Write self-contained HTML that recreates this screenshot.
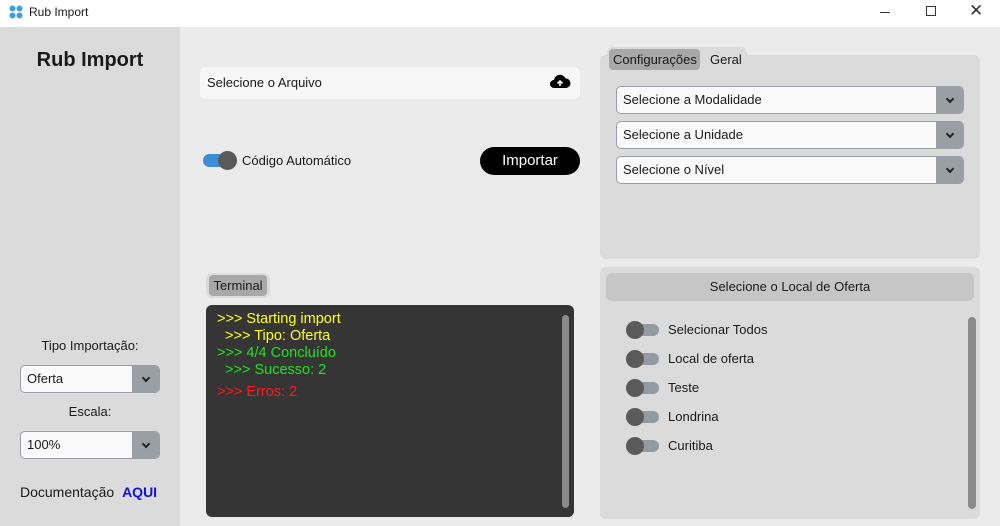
<!DOCTYPE html><html><head><style>
*{margin:0;padding:0;box-sizing:border-box}
body{width:1000px;height:526px;overflow:hidden;background:#ebebeb;font-family:"Liberation Sans",sans-serif;font-size:13px;color:#1a1a1a;position:relative}
.a{position:absolute}
.sel{position:absolute;background:#f9f9f9;border:1px solid #9a9ea5;border-radius:5px;overflow:hidden}
.sel span{position:absolute;left:6px;top:5px;font-size:13px}
.sel b{position:absolute;right:0;top:0;bottom:0;width:27px;background:#9a9ea5}
.sel b:after{content:"";position:absolute;left:11px;top:9px;width:4px;height:4px;border-right:2px solid #222;border-bottom:2px solid #222;transform:rotate(45deg)}
.tg{position:absolute;width:33px;height:12px;border-radius:6px;background:#939ba2}
.tg i{position:absolute;left:0;top:-3px;width:18px;height:18px;border-radius:50%;background:#5a5a5a}
.lb{position:absolute;left:668px;font-size:13px}
</style></head><body>
<div class="a" style="left:0;top:0;width:1000px;height:27px;background:#fff"></div>
<svg class="a" style="left:9px;top:5px" width="14" height="14"><g fill="#3a9ee6"><circle cx="3.5" cy="3.5" r="3"/><circle cx="10.5" cy="3.5" r="3"/><circle cx="3.5" cy="10.5" r="3"/><circle cx="10.5" cy="10.5" r="3"/></g></svg>
<div class="a" style="left:29px;top:5px;font-size:12px">Rub Import</div>
<div class="a" style="left:880px;top:12px;width:10px;height:1px;background:#333"></div>
<div class="a" style="left:926px;top:6px;width:10px;height:10px;border:1px solid #333"></div>
<div class="a" style="left:969px;top:1px;font-size:17px;color:#333">✕</div>
<div class="a" style="left:0;top:27px;width:180px;height:499px;background:#dbdbdb"></div>
<div class="a" style="left:0;top:49px;width:180px;text-align:center;font-size:20px;font-weight:bold">Rub Import</div>
<div class="a" style="left:0;top:338px;width:180px;text-align:center">Tipo Importação:</div>
<div class="sel" style="left:20px;top:365px;width:140px;height:28px"><span>Oferta</span><b></b></div>
<div class="a" style="left:0;top:404px;width:180px;text-align:center">Escala:</div>
<div class="sel" style="left:20px;top:431px;width:140px;height:28px"><span>100%</span><b></b></div>
<div class="a" style="left:20px;top:484px;font-size:14px">Documentação <b style="color:#1010e0;margin-left:4px">AQUI</b></div>

<div class="a" style="left:200px;top:67px;width:380px;height:32px;background:#f7f7f7;border-radius:6px"></div>
<div class="a" style="left:207px;top:75px">Selecione o Arquivo</div>
<svg class="a" style="left:549px;top:73px" width="22" height="18" viewBox="0 0 22 18"><path d="M5 15a4 4 0 0 1 0-8 6 6 0 0 1 11.5-1.5A4.5 4.5 0 0 1 17 15z" fill="#000"/><path d="M11 13V8M8.5 10.5 11 8l2.5 2.5" stroke="#fff" stroke-width="1.6" fill="none"/></svg>
<div class="a" style="left:203px;top:154px;width:33px;height:13px;border-radius:7px;background:#3a8dd6"></div>
<div class="a" style="left:218px;top:151px;width:19px;height:19px;border-radius:50%;background:#5a5a5a"></div>
<div class="a" style="left:242px;top:153px">Código Automático</div>
<div class="a" style="left:480px;top:147px;width:100px;height:28px;background:#000;border-radius:14px;color:#fff;font-size:15px;text-align:center;line-height:28px">Importar</div>

<div class="a" style="left:206px;top:273px;width:64px;height:25px;background:#dbdbdb;border-radius:6px"></div>
<div class="a" style="left:209px;top:275px;width:58px;height:21px;background:#a8a8a8;border-radius:4px;text-align:center;line-height:21px">Terminal</div>
<div class="a" style="left:206px;top:305px;width:368px;height:212px;background:#353535;border-radius:6px"></div>
<div class="a" style="left:562px;top:315px;width:7px;height:193px;background:#8b8b8b;border-radius:4px"></div>
<div class="a" style="left:217px;top:311px;font-size:14.5px;line-height:17px;white-space:pre"><span style="color:#ffff22">>>> Starting import
  >>> Tipo: Oferta</span>
<span style="color:#22e022">>>> 4/4 Concluído
  >>> Sucesso: 2</span></div>
<div class="a" style="left:217px;top:384px;font-size:14.5px;color:#ff1a1a">>>> Erros: 2</div>

<div class="a" style="left:600px;top:55px;width:380px;height:204px;background:#dbdbdb;border-radius:6px"></div>
<div class="a" style="left:607px;top:47px;width:140px;height:25px;background:#dbdbdb;border-radius:6px"></div>
<div class="a" style="left:609px;top:49px;width:91px;height:21px;background:#a8a8a8;border-radius:4px"></div>
<div class="a" style="left:613px;top:52px">Configurações</div>
<div class="a" style="left:710px;top:52px">Geral</div>
<div class="sel" style="left:616px;top:86px;width:348px;height:28px"><span>Selecione a Modalidade</span><b></b></div>
<div class="sel" style="left:616px;top:121px;width:348px;height:28px"><span>Selecione a Unidade</span><b></b></div>
<div class="sel" style="left:616px;top:156px;width:348px;height:28px"><span>Selecione o Nível</span><b></b></div>

<div class="a" style="left:600px;top:267px;width:380px;height:252px;background:#dbdbdb;border-radius:6px"></div>
<div class="a" style="left:606px;top:273px;width:368px;height:28px;background:#c6c6c6;border-radius:6px;text-align:center;line-height:28px">Selecione o Local de Oferta</div>
<div class="a" style="left:968px;top:317px;width:8px;height:192px;background:#8b8b8b;border-radius:4px"></div>
<div class="tg" style="left:626px;top:324px"><i></i></div><div class="lb" style="top:322px">Selecionar Todos</div>
<div class="tg" style="left:626px;top:353px"><i></i></div><div class="lb" style="top:351px">Local de oferta</div>
<div class="tg" style="left:626px;top:382px"><i></i></div><div class="lb" style="top:380px">Teste</div>
<div class="tg" style="left:626px;top:411px"><i></i></div><div class="lb" style="top:409px">Londrina</div>
<div class="tg" style="left:626px;top:440px"><i></i></div><div class="lb" style="top:438px">Curitiba</div>
</body></html>
